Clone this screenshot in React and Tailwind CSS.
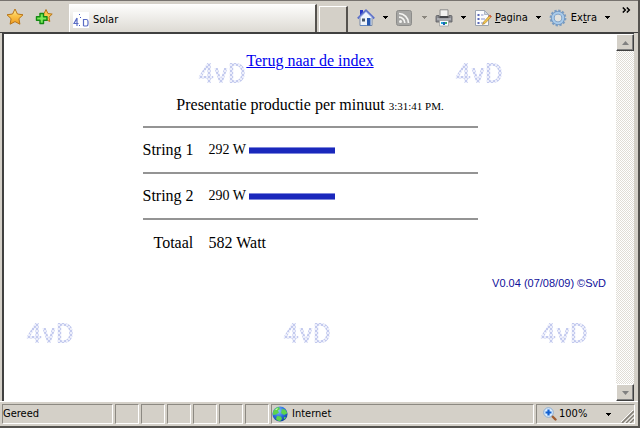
import React from 'react';

const STRINGS = [
  { name: 'String 1', watt: 292 },
  { name: 'String 2', watt: 290 },
];

const PANES = [1, 2, 3, 4, 5, 6];

const Caret = ({ className = 'text-black' }) => (
  <svg viewBox="0 0 6 3" className={`w-[6px] h-[3px] shrink-0 ${className}`} shapeRendering="crispEdges">
    <path d="M0 0h6L3 3z" fill="currentColor" />
  </svg>
);

const StarIcon = () => (
  <svg viewBox="0 0 18 18" className="w-[18px] h-[18px]">
    <defs>
      <linearGradient id="star" x1="0" y1="0" x2="0" y2="1">
        <stop offset="0" stopColor="#fff0a0" />
        <stop offset=".45" stopColor="#fbc44a" />
        <stop offset="1" stopColor="#f09a1c" />
      </linearGradient>
    </defs>
    <path d="M9 1l2.400 5 5.600.8-4.100 3.900 1 5.500L9 13.600l-4.900 2.600 1-5.500L1 6.800 6.600 6z" fill="url(#star)" stroke="#b87418" strokeLinejoin="round" />
  </svg>
);

const AddStarIcon = () => (
  <svg viewBox="0 0 18 18" className="w-[18px] h-[18px]">
    <path d="M11 1.500l1.900 4 4.300.6-3.200 3 .8 4.400-3.800-2L7.200 13.500 8 9.100l-3.200-3 4.300-.6z" fill="#fbc64e" stroke="#b87418" strokeLinejoin="round" />
    <path d="M5 5.500h3.500v3.200H12v3.500H8.500v3.300H5v-3.300H1.500V8.700H5z" fill="#7cea58" stroke="#128a12" strokeWidth="1.400" strokeLinejoin="round" />
  </svg>
);

const Favicon = () => (
  <svg viewBox="0 0 16 16" className="w-4 h-4 shrink-0">
    <path d="M0 0h16v16H0z" fill="#fff" />
    <path d="M4 6L1 11.500h4.500M4 6v8M10.500 7v7M10.500 7.500h3q1.500 0 1.500 2v2.500q0 2-1.500 2h-3" fill="none" stroke="#5a6cc4" strokeWidth="1.200" />
    <path d="M6 2h1v1H6zM7 5h1v1H7zM6 13h1v1H6z" fill="#4458c0" />
  </svg>
);

const HomeIcon = () => (
  <svg viewBox="0 0 18 18" className="w-[18px] h-[18px]">
    <path d="M3 1h3v5H3z" fill="#2638c8" />
    <path d="M3 8l6-6 6 6v8.500H3z" fill="#eef3fa" stroke="#7a8ba8" />
    <path d="M.8 9.500L9 1.500l8.200 8" fill="none" stroke="#5c70c8" strokeWidth="2" />
    <path d="M2.500 9L9 2.800 15.500 9" fill="none" stroke="#c4d2f2" />
    <path d="M5 9.500h3v3H5z" fill="#455468" />
    <path d="M10 9h3.500v7.500H10z" fill="#2457b0" />
    <path d="M3 16.500h6" stroke="#5d86c4" />
  </svg>
);

const FeedIcon = () => (
  <svg viewBox="0 0 16 16" className="w-4 h-4">
    <rect x=".5" y=".5" width="15" height="15" rx="2" fill="#a5a5a3" stroke="#8c8c8a" />
    <circle cx="4.500" cy="11.500" r="1.500" fill="#f4f4f2" />
    <path d="M3 7.200A5.800 5.800 0 0 1 8.800 13M3 3.500A9.500 9.500 0 0 1 12.500 13" fill="none" stroke="#f4f4f2" strokeWidth="1.700" />
  </svg>
);

const PrinterIcon = () => (
  <svg viewBox="0 0 18 18" className="w-[18px] h-[18px]">
    <path d="M5 .8h8v7H5z" fill="#f2f2f0" stroke="#8c8c8c" />
    <path d="M1 7.500q0-1 1-1h2V9h10V6.500h2q1 0 1 1v5.500H1z" fill="#8b8d92" stroke="#5a5c60" strokeWidth=".8" />
    <path d="M4.500 7h9v2h-9z" fill="#44464a" />
    <path d="M2 10h14" stroke="#c9cbd0" />
    <path d="M4.500 11.500h9V17h-9z" fill="#f8fcff" stroke="#9a9a9a" strokeWidth=".7" />
    <path d="M6 13h2v2H6z" fill="#28a8d8" />
    <path d="M8 13h2v3H8z" fill="#1c60b8" />
    <path d="M10 13h2v2h-2z" fill="#38b070" />
  </svg>
);

const PageIcon = () => (
  <svg viewBox="0 0 18 18" className="w-[18px] h-[18px]">
    <path d="M1.500 1.500h9l4 4v11h-13z" fill="#fbfcfe" stroke="#9aa2ae" />
    <path d="M10.500 1.500v4h4z" fill="#cdd6e4" stroke="#9aa2ae" strokeWidth=".7" />
    <path d="M3.500 5h2v2h-2zM3.500 9h2v2h-2zM3.500 13h2v2h-2z" fill="#5a68b8" />
    <path d="M7 6h2.500M7 10h4M7 14h3" stroke="#8892c8" />
    <path d="M16 6l1.500 1.500-6.500 7-2.500 1 1-2.500z" fill="#f2c44c" stroke="#a07828" strokeWidth=".6" />
    <path d="M15 7l1-1.200L17.600 7.400l-1 1.100z" fill="#d85848" />
  </svg>
);

const GearIcon = () => (
  <svg viewBox="0 0 18 18" className="w-[18px] h-[18px]">
    <circle cx="9" cy="9" r="7.200" fill="none" stroke="#7b9dc2" strokeWidth="2.400" strokeDasharray="2.260 1.510" />
    <circle cx="9" cy="9" r="5.200" fill="#e2e2de" stroke="#6f95c0" strokeWidth="3.600" />
    <circle cx="9" cy="9" r="5.200" fill="none" stroke="#a9cbea" strokeWidth="2" />
  </svg>
);

const GlobeIcon = () => (
  <svg viewBox="0 0 16 16" className="w-4 h-4 shrink-0">
    <defs>
      <radialGradient id="sea" cx=".4" cy=".3" r=".8">
        <stop offset="0" stopColor="#8cc4ff" />
        <stop offset=".5" stopColor="#2c70dc" />
        <stop offset="1" stopColor="#123a90" />
      </radialGradient>
    </defs>
    <circle cx="8" cy="8" r="7.600" fill="url(#sea)" />
    <path d="M2 4q2-3 5-3l1 2-2 1.500 1 2-3 2L1 9q-.6-3 1-5zM10 3l3 .5q2 2 2 4L12 9 9 7zM5 10l4 .5 1 2.500-2 2.300q-3-.4-4-2.300zM12 11l2 .2-2 2.500z" fill="#5cd44c" />
    <path d="M3 4q1.500-2 3-2l-1 2z" fill="#c8f4b0" />
  </svg>
);

const ZoomIcon = () => (
  <svg viewBox="0 0 14 14" className="w-[14px] h-[14px] shrink-0">
    <path d="M8.500 8.500l4 4" stroke="#a05c30" strokeWidth="2.400" strokeLinecap="round" />
    <circle cx="5.500" cy="5.500" r="4.800" fill="#d8ecff" stroke="#8cacd0" />
    <path d="M5.500 2.500v6M2.500 5.500h6" stroke="#1260d0" strokeWidth="2.200" />
  </svg>
);

const Grip = () => (
  <svg viewBox="0 0 13 13" className="w-[13px] h-[13px] shrink-0 self-end">
    <path d="M1 13L13 1M5 13l8-8M9 13l4-4" stroke="#848078" strokeWidth="1.600" />
    <path d="M0 12L12 0M3.500 13L13 3.500M7.500 13L13 7.500" stroke="#fff" strokeWidth=".9" />
  </svg>
);

const Watermark = ({ className }) => (
  <span
    aria-hidden="true"
    className={`absolute text-[28px] leading-[36px] font-medium text-transparent bg-clip-text bg-[repeating-conic-gradient(#c3caee_0_25%,#eceefb_0_50%)] bg-[size:4px_4px] font-[Roboto,'Liberation_Sans',sans-serif] ${className}`}
  >
    4vD
  </span>
);

const Toolbar = () => (
  <header className="flex h-[33px] shrink-0 items-end border-t border-[#77736f] border-b border-b-[#404040] bg-[#d4d0c8]">
    <div className="flex w-[69px] shrink-0 gap-[11px] self-center pl-[6px]">
      <button type="button" aria-label="Favorieten"><StarIcon /></button>
      <button type="button" aria-label="Toevoegen"><AddStarIcon /></button>
    </div>
    <button
      type="button"
      className="flex h-[28px] w-[248px] items-center gap-1 border-t border-l border-white border-r-2 border-r-[#55524e] bg-linear-to-b from-[#fdfdfc] to-[#dddad3] pt-[2px] pl-[3px]"
    >
      <Favicon />
      Solar
    </button>
    <button
      type="button"
      aria-label="Nieuw tabblad"
      className="ml-[2px] h-[26px] w-[29px] border-t border-l border-white border-r-2 border-r-[#55524e]"
    />
    <div className="ml-auto flex items-center self-center pr-[7px] pt-[2px]">
      <button type="button" aria-label="Startpagina" className="flex items-center gap-[7px]"><HomeIcon /><Caret /></button>
      <button type="button" aria-label="Feeds" className="ml-2 flex items-center gap-[9px]"><FeedIcon /><Caret className="text-[#8a867e]" /></button>
      <button type="button" aria-label="Afdrukken" className="ml-2 flex items-center gap-[7px]"><PrinterIcon /><Caret /></button>
      <button type="button" className="ml-2 flex items-center">
        <PageIcon />
        <span className="mr-[7px] ml-[3px]"><u>P</u>agina</span>
        <Caret />
      </button>
      <button type="button" className="ml-2 flex items-center">
        <GearIcon />
        <span className="mr-[7px] ml-1">Ex<u>t</u>ra</span>
        <Caret />
      </button>
      <button type="button" aria-label="Meer" className="ml-3 self-start">
        <svg viewBox="0 0 9 6" className="-mt-[2px] h-[6px] w-[9px]">
          <path d="M.8.500l2.500 2.500L.8 5.500M4.800.500l2.500 2.500-2.500 2.500" fill="none" stroke="#000" strokeWidth="1.500" />
        </svg>
      </button>
    </div>
  </header>
);

const SolarPage = () => {
  const total = STRINGS.reduce((sum, s) => sum + s.watt, 0);

  return (
    <main className="relative flex-1 overflow-hidden bg-white px-2 pt-[17px] text-base leading-5 font-['Liberation_Serif',serif]">
      <Watermark className="top-[22px] left-[194px]" />
      <Watermark className="top-[22px] left-[451px]" />
      <Watermark className="top-[282px] left-[22px]" />
      <Watermark className="top-[282px] left-[279px]" />
      <Watermark className="top-[282px] left-[536px]" />

      <div className="relative">
        <p className="text-center"><a href="#index" className="text-[#0000ee] underline">Terug naar de index</a></p>
        <p className="mt-6 text-center">
          Presentatie productie per minuut <span className="text-[11px]">3:31:41 PM.</span>
        </p>

        <table className="mx-auto mt-[10px] w-[335px] border-collapse">
          <tbody>
            {STRINGS.map((s) => (
              <tr key={s.name} className="h-[46px] border-t-2 border-[#949494]">
                <th scope="row" className="w-[66px] p-0 text-left font-normal">{s.name}</th>
                <td className="p-0">
                  <div className="flex items-center">
                    <span className="w-10 text-sm">{s.watt} W</span>
                    <span className="h-[7px] w-[86px] border-y border-[#7f88dc] bg-[#1a28bc]" />
                  </div>
                </td>
              </tr>
            ))}
            <tr className="h-[46px] border-t-2 border-[#949494]">
              <th scope="row" className="p-0 pl-[11px] text-left font-normal">Totaal</th>
              <td className="p-0">{total} Watt</td>
            </tr>
          </tbody>
        </table>

        <p className="mt-2 pr-[2px] text-right text-[11px] text-[#10109a] font-['Liberation_Sans',sans-serif]">
          V0.04 (07/08/09) ©SvD
        </p>
      </div>
    </main>
  );
};

const ScrollButton = ({ label, down }) => (
  <button
    type="button"
    aria-label={label}
    className="flex h-[17px] items-center justify-center border border-t-white border-l-white border-r-[#404040] border-b-[#404040] bg-[#d4d0c8] shadow-[inset_-1px_-1px_#808080]"
  >
    <svg viewBox="0 0 7 4" className={`h-[4px] w-[7px] ${down ? 'rotate-180' : ''}`}>
      <path d="M0 4h7L3.500 0z" fill="#808080" />
    </svg>
  </button>
);

const StatusBar = () => (
  <footer className="flex h-[25px] shrink-0 gap-[2px] border-t border-white bg-[#d4d0c8] pt-[2px] pr-[3px] pb-[2px] pl-[2px]">
    <div className="flex w-[111px] items-center border border-t-[#8c8982] border-l-[#8c8982] border-r-white border-b-white">Gereed</div>
    {PANES.map((p) => (
      <div key={p} className="w-6 border border-t-[#8c8982] border-l-[#8c8982] border-r-white border-b-white" />
    ))}
    <div className="flex flex-1 items-center gap-1 border border-t-[#8c8982] border-l-[#8c8982] border-r-white border-b-white">
      <GlobeIcon />
      Internet
    </div>
    <div className="flex w-[99px] items-center border border-t-[#8c8982] border-l-[#8c8982] border-r-white border-b-white pl-[6px]">
      <button type="button" className="flex flex-1 items-center gap-[2px]">
        <ZoomIcon />
        <span className="flex-1 text-left">100%</span>
        <Caret />
      </button>
      <span className="ml-[10px] flex self-end"><Grip /></span>
    </div>
  </footer>
);

const App = () => (
  <div className="flex min-h-screen flex-col border-r-2 border-b-2 border-[#55534f] bg-[#d4d0c8] text-[11px] leading-4 text-black font-['DejaVu_Sans_Condensed','DejaVu_Sans',sans-serif]">
    <Toolbar />
    <div className="flex flex-1 border-l-2 border-[#d4d0c8] pr-1">
      <div className="flex flex-1 border-t border-l-2 border-[#404040]">
        <SolarPage />
        <div className="flex w-[18px] shrink-0 flex-col justify-between bg-[repeating-conic-gradient(#ffffff_0_25%,#e0ddd6_0_50%)] bg-[size:2px_2px]">
          <ScrollButton label="Omhoog" />
          <ScrollButton label="Omlaag" down />
        </div>
      </div>
    </div>
    <StatusBar />
  </div>
);

export default App;
